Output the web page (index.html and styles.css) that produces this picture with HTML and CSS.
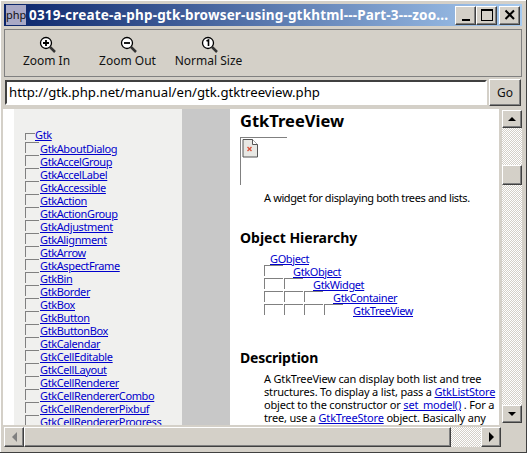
FILE: index.html
```html
<!DOCTYPE html>
<html lang="en">
<head>
<meta charset="utf-8">
<title>GtkTreeView</title>
<link rel="stylesheet" href="styles.css">
</head>
<body>
<div class="window">
  <div class="titlebar">
    <div class="appicon">php</div>
    <div class="title">0319-create-a-php-gtk-browser-using-gtkhtml---Part-3---zoo...</div>
    <div class="winbtns">
      <button class="winbtn"><svg width="16" height="14" viewBox="0 0 16 14"><rect x="4" y="11" width="8" height="2" fill="#000"/></svg></button>
      <button class="winbtn"><svg width="16" height="14" viewBox="0 0 16 14"><rect x="2.500" y="2.500" width="11" height="10" fill="none" stroke="#000"/><rect x="2" y="1" width="12" height="2"/></svg></button>
      <button class="winbtn close"><svg width="16" height="14" viewBox="0 0 16 14"><path d="M3.500 2.500l8.500 8.500M12 2.500l-8.500 8.500" stroke="#000" stroke-width="2" fill="none"/></svg></button>
    </div>
  </div>
  <div class="toolbar">
    <div class="tool">
      <svg class="toolicon" width="18" height="18" viewBox="0 0 18 18"><circle cx="8" cy="7" r="5.500" fill="#fff" stroke="#000" stroke-width="1.300"/><path d="M12 11l5 5" stroke="#333" stroke-width="2.500"/><path d="M5 7h6M8 4v6" stroke="#000" stroke-width="1.800"/></svg>
      <span>Zoom In</span>
    </div>
    <div class="tool">
      <svg class="toolicon" width="18" height="18" viewBox="0 0 18 18"><circle cx="8" cy="7" r="5.500" fill="#fff" stroke="#000" stroke-width="1.300"/><path d="M12 11l5 5" stroke="#333" stroke-width="2.500"/><path d="M5 7h6" stroke="#000" stroke-width="1.800"/></svg>
      <span>Zoom Out</span>
    </div>
    <div class="tool">
      <svg class="toolicon" width="18" height="18" viewBox="0 0 18 18"><circle cx="8" cy="7" r="5.500" fill="#fff" stroke="#000" stroke-width="1.300"/><path d="M12 11l5 5" stroke="#333" stroke-width="2.500"/><path d="M6.500 5l2-1v6" fill="none" stroke="#000" stroke-width="1.600"/></svg>
      <span>Normal Size</span>
    </div>
  </div>
  <div class="addressbar">
    <div class="urlbox">http://gtk.php.net/manual/en/gtk.gtktreeview.php</div>
    <button class="go">Go</button>
  </div>
  <div class="main">
    <div class="viewport">
      <div class="sidebar">
        <ul class="tree">
          <li class="root"><i class="rootbox"></i><a href="#">Gtk</a></li>
          <li><i></i><a href="#">GtkAboutDialog</a></li>
          <li><i></i><a href="#">GtkAccelGroup</a></li>
          <li><i></i><a href="#">GtkAccelLabel</a></li>
          <li><i></i><a href="#">GtkAccessible</a></li>
          <li><i></i><a href="#">GtkAction</a></li>
          <li><i></i><a href="#">GtkActionGroup</a></li>
          <li><i></i><a href="#">GtkAdjustment</a></li>
          <li><i></i><a href="#">GtkAlignment</a></li>
          <li><i></i><a href="#">GtkArrow</a></li>
          <li><i></i><a href="#">GtkAspectFrame</a></li>
          <li><i></i><a href="#">GtkBin</a></li>
          <li><i></i><a href="#">GtkBorder</a></li>
          <li><i></i><a href="#">GtkBox</a></li>
          <li><i></i><a href="#">GtkButton</a></li>
          <li><i></i><a href="#">GtkButtonBox</a></li>
          <li><i></i><a href="#">GtkCalendar</a></li>
          <li><i></i><a href="#">GtkCellEditable</a></li>
          <li><i></i><a href="#">GtkCellLayout</a></li>
          <li><i></i><a href="#">GtkCellRenderer</a></li>
          <li><i></i><a href="#">GtkCellRendererCombo</a></li>
          <li><i></i><a href="#">GtkCellRendererPixbuf</a></li>
          <li><i></i><a href="#">GtkCellRendererProgress</a></li>
        </ul>
      </div>
      <div class="gutter"></div>
      <div class="content">
        <h1>GtkTreeView</h1>
        <div class="brokenimg">
          <svg width="16" height="19" viewBox="0 0 16 19"><path d="M1 .5h9.500l5 5v12.500h-14.500z" fill="#e8e8e4" stroke="#555"/><path d="M10.500 .5v5h5" fill="#fff" stroke="#555"/><path d="M5.500 8l4 4M9.500 8l-4 4" stroke="#d8543c" stroke-width="1.400"/></svg>
        </div>
        <p class="lead">A widget for displaying both trees and lists.</p>
        <h2 class="hier-title">Object Hierarchy</h2>
        <div class="hier">
          <div class="hrow"><a href="#">GObject</a></div>
          <div class="hrow"><i></i><a href="#">GtkObject</a></div>
          <div class="hrow"><i></i><i></i><a href="#">GtkWidget</a></div>
          <div class="hrow"><i></i><i></i><i></i><a href="#">GtkContainer</a></div>
          <div class="hrow"><i></i><i></i><i></i><i></i><a href="#">GtkTreeView</a></div>
        </div>
        <h2 class="desc-title">Description</h2>
        <p class="desc">A GtkTreeView can display both list and tree structures. To display a list, pass a <a href="#">GtkListStore</a> object to the constructor or <a href="#">set_model()</a> . For a tree, use a <a href="#">GtkTreeStore</a> object. Basically any</p>
      </div>
    </div>
    <div class="vscroll">
      <button class="sbtn"><span class="arrow up"></span></button>
      <div class="track"><div class="thumb"></div></div>
      <button class="sbtn"><span class="arrow down"></span></button>
    </div>
  </div>
  <div class="hscroll">
    <button class="sbtn h disabled"><span class="arrow left"></span></button>
    <div class="hthumb"></div>
    <div class="htrack"></div>
    <button class="sbtn h"><span class="arrow right"></span></button>
  </div>
</div>
</body>
</html>
```
FILE: styles.css
```css
* { box-sizing: border-box; }
html, body { margin: 0; padding: 0; height: 100%; }
body { background: #d4d0c8; font-family: "Noto Sans", sans-serif; font-size: 11px; color: #000; overflow: hidden; }
a { color: #0000cc; text-decoration: underline; }
button { font-family: inherit; padding: 0; margin: 0; }

.window { width: 527px; height: 453px; padding: 4px 4px 5px; display: flex; flex-direction: column; background: #d4d0c8; border-bottom: 1px solid #404040; border-right: 1px solid #404040; box-shadow: inset 1px 1px 0 #fff; }

.titlebar { height: 22px; flex: none; display: flex; align-items: center; padding: 0 2px; background: linear-gradient(90deg, #0a246a 0%, #a6caf0 100%); }
.appicon { width: 20px; height: 20px; flex: none; background: #a9a9c6; color: #111; font-size: 11px; line-height: 20px; text-align: center; }
.title { flex: 1; min-width: 0; padding-left: 3px; font-size: 13.500px; letter-spacing: 0.18px; font-weight: bold; color: #fff; white-space: nowrap; overflow: hidden; }
.winbtns { display: flex; flex: none; }
.winbtn { width: 21px; height: 19px; background: #d4d0c8; border: 1px solid; border-color: #fff #404040 #404040 #fff; box-shadow: inset -1px -1px 0 #808080; display: flex; align-items: center; justify-content: center; }
.winbtn.close { margin-left: 2px; }

.toolbar { height: 48px; flex: none; margin-top: 3px; display: flex; padding: 0 0 0 1px; border: 1px solid #808080; }
.tool { display: flex; flex-direction: column; align-items: center; width: 81px; padding-top: 6px; font-size: 12px; line-height: 14px; color: #111; }
.toolicon { display: block; }

.addressbar { height: 27px; flex: none; margin-top: 2px; padding: 0 1px; display: flex; gap: 2px; }
.urlbox { flex: 1; min-width: 0; height: 25px; margin-top: 1px; background: #fff; border: 2px solid; border-color: #404040 #fff #fff #404040; padding: 2px 0 0 2px; font-size: 13.200px; line-height: 17px; white-space: nowrap; overflow: hidden; }
.go { width: 32px; height: 27px; flex: none; background: #d4d0c8; border: 1px solid; border-color: #fff #404040 #404040 #fff; box-shadow: inset -1px -1px 0 #808080; font-size: 12px; color: #111; }

.main { flex: 1; min-height: 0; display: flex; margin: 3px 0 0 -1px; }
.viewport { flex: 1; min-width: 0; display: flex; overflow: hidden; background: #fff; padding-left: 11px; letter-spacing: -0.380px; }
.sidebar { width: 168px; flex: none; background: #f0f0ee; padding: 19px 0 0 11px; overflow: hidden; }
.gutter { width: 48px; flex: none; background: #c8c8c8; }
.content { flex: 1; min-width: 0; padding: 0 0 0 10px; overflow: hidden; background: #fff; }

.tree { list-style: none; margin: 0; padding: 0; }
.tree li { display: flex; height: 13px; line-height: 13px; white-space: nowrap; }
.tree li.root { height: 14px; }
.tree li i { display: block; width: 14px; height: 11px; margin-right: 1px; flex: none; border-top: 1px solid #808080; border-left: 1px solid #808080; }
.tree li .rootbox { height: 7px; margin-top: 5px; width: 10px; margin-right: 0; }

h1 { margin: 0; padding-top: 1px; font-size: 16.500px; line-height: 22px; font-weight: bold; letter-spacing: 0; }
.brokenimg { width: 47px; height: 48px; margin-top: 5px; border-top: 1px solid #808080; border-left: 1px solid #808080; padding: 1px 0 0 1px; }
.brokenimg svg { display: block; }
.lead { margin: 6px 0 0 24px; line-height: 14px; }
.hier-title { margin: 23px 0 0; font-size: 14px; line-height: 20px; font-weight: bold; letter-spacing: 0; }
.hier { margin: 4px 0 0 24px; }
.hrow { display: flex; height: 13px; line-height: 13px; white-space: nowrap; }
.hrow > a:first-child { margin-left: 6px; }
.hrow i { display: block; width: 19px; height: 11px; margin-right: 1px; flex: none; border-top: 1px solid #808080; border-left: 1px solid #808080; }
.hrow a { margin-left: 9px; }
.desc-title { margin: 31px 0 0; font-size: 14px; line-height: 20px; font-weight: bold; letter-spacing: -0.200px; }
.desc { margin: 4px 0 0 24px; line-height: 13px; letter-spacing: -0.180px; }

.vscroll { width: 23px; flex: none; display: flex; flex-direction: column; padding: 1px 0 2px 3px; }
.track { flex: 1; min-height: 0; background: repeating-conic-gradient(#d4d0c8 0 25%, #fff 0 50%) 0 0 / 2px 2px; position: relative; }
.thumb { position: absolute; left: 0; right: 0; top: 37px; height: 20px; background: #d4d0c8; border: 1px solid; border-color: #fff #404040 #404040 #fff; box-shadow: inset -1px -1px 0 #808080; }
.sbtn { width: 20px; height: 18px; flex: none; background: #d4d0c8; border: 1px solid; border-color: #fff #404040 #404040 #fff; box-shadow: inset -1px -1px 0 #808080; display: flex; align-items: center; justify-content: center; }
.arrow { display: block; width: 0; height: 0; border-style: solid; }
.arrow.up { border-width: 0 4px 4px; border-color: transparent transparent #000; }
.arrow.down { border-width: 4px 4px 0; border-color: #000 transparent transparent; }
.arrow.left { border-width: 5px 5px 5px 0; border-color: transparent #808080 transparent transparent; }
.arrow.right { border-width: 5px 0 5px 5px; border-color: transparent transparent transparent #000; }

.hscroll { height: 20px; flex: none; display: flex; margin: 2px 21px 0 0; }
.sbtn.h { height: 20px; }
.hthumb { flex: 1; background: #d4d0c8; border: 1px solid; border-color: #fff #404040 #404040 #fff; box-shadow: inset -1px -1px 0 #808080; }
.htrack { width: 30px; flex: none; background: repeating-conic-gradient(#d4d0c8 0 25%, #fff 0 50%) 0 0 / 2px 2px; }
```
